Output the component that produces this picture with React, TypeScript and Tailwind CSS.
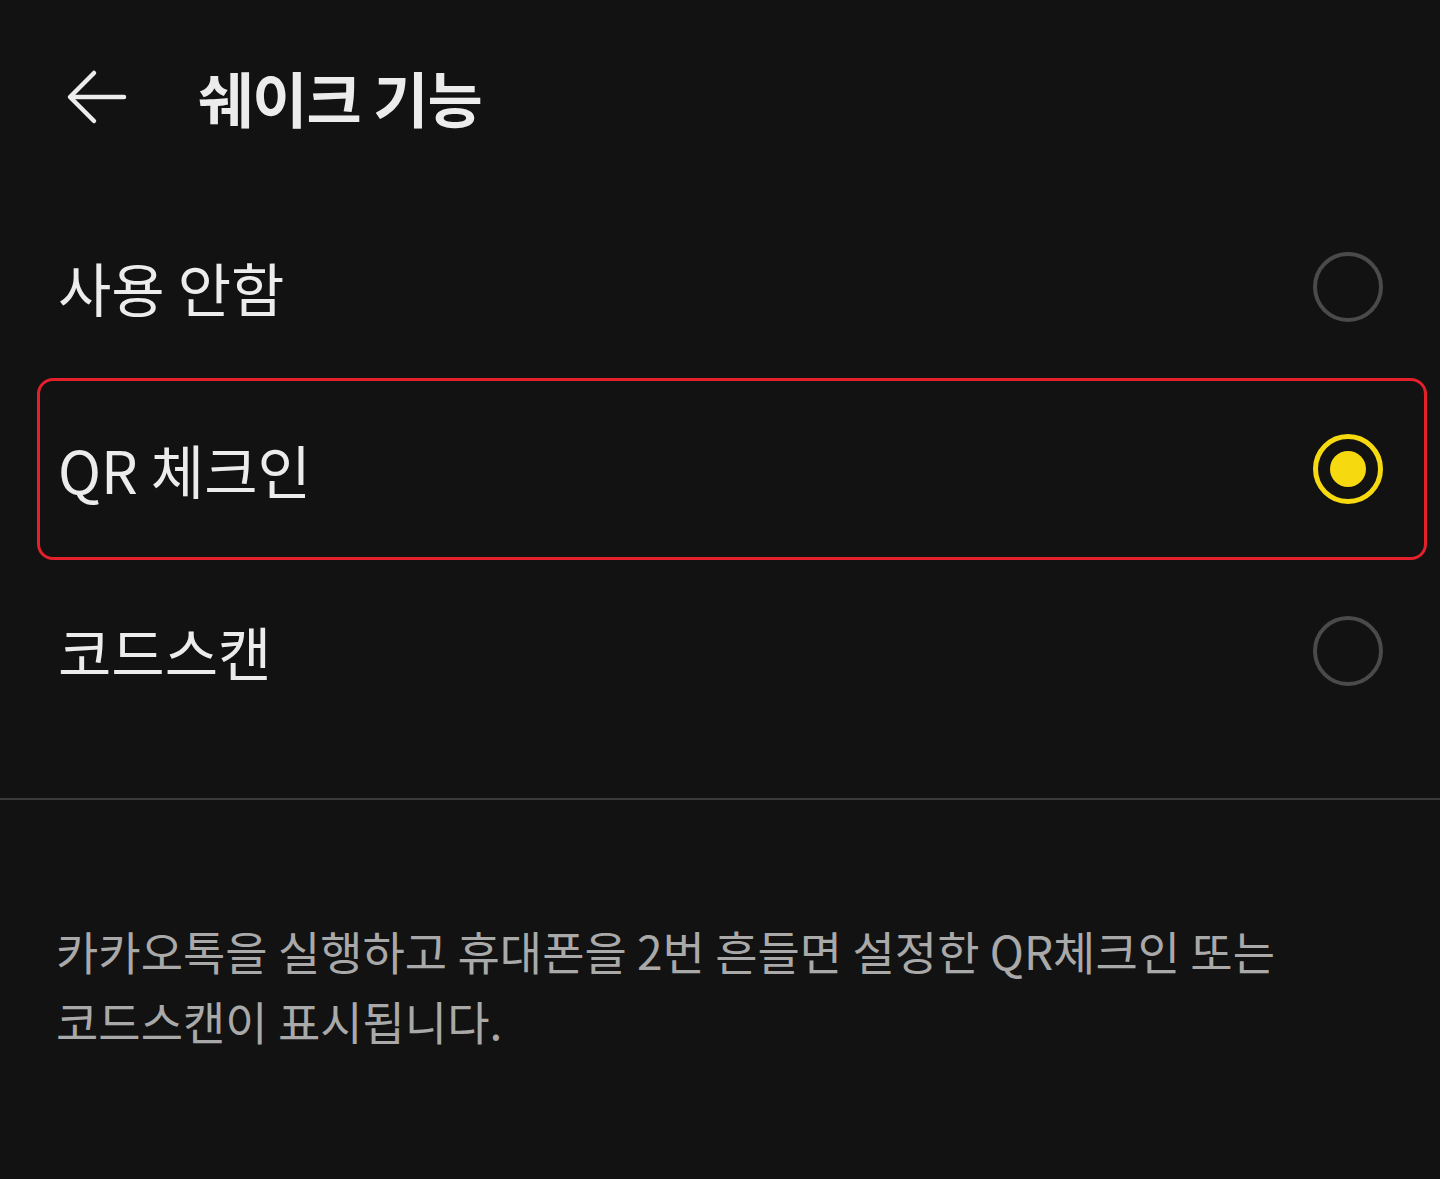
const font = { fontFamily: '"Noto Sans CJK KR", "Noto Sans", sans-serif' };

type Option = { label: string; selected?: boolean };

const options: Option[] = [
  { label: "사용 안함" },
  { label: "QR 체크인", selected: true },
  { label: "코드스캔" },
];

function Radio({ on }: { on?: boolean }) {
  if (on) {
    return (
      <div className="w-[70px] h-[70px] rounded-full border-[5px] border-[#f6d90f] flex items-center justify-center">
        <div className="w-[36px] h-[36px] rounded-full bg-[#f6d90f]" />
      </div>
    );
  }
  return <div className="w-[70px] h-[70px] rounded-full border-[4px] border-[#4a4a4a]" />;
}

export default function App() {
  return (
    <div className="w-[1440px] h-[1179px] bg-[#121212] text-[#ececec] overflow-hidden" style={font}>
      {/* Header */}
      <header className="h-[196px] flex items-center pl-[66px] pb-[2px]">
        <svg width="62" height="56" viewBox="0 0 62 56" fill="none" stroke="#ececec" strokeWidth="4.5" strokeLinecap="round" strokeLinejoin="round">
          <path d="M58 28H5" />
          <path d="M28 4L4 28l24 24" />
        </svg>
        <h1 className="ml-[70px] text-[60px] font-bold tracking-[-1px] leading-none">쉐이크 기능</h1>
      </header>

      {/* Options */}
      <div className="flex flex-col">
        {options.map((o) => (
          <div
            key={o.label}
            className={
              o.selected
                ? "ml-[37px] mr-[13px] h-[182px] rounded-[16px] border-[3px] border-[#e3202b] flex items-center justify-between pl-[18px] pr-[41px]"
                : "ml-[37px] mr-[13px] h-[182px] border-[3px] border-transparent flex items-center justify-between pl-[18px] pr-[41px]"
            }
          >
            <span className="text-[58px] leading-none">{o.label}</span>
            <Radio on={o.selected} />
          </div>
        ))}
      </div>

      <div className="mt-[56px] h-[2px] bg-[#3a3a3a]" />

      {/* Description */}
      <p className="mt-[115px] px-[56px] text-[46px] leading-[70px] text-[#a9a9a9] whitespace-nowrap">
        카카오톡을 실행하고 휴대폰을 2번 흔들면 설정한 QR체크인 또는
        <br />
        코드스캔이 표시됩니다.
      </p>
    </div>
  );
}
